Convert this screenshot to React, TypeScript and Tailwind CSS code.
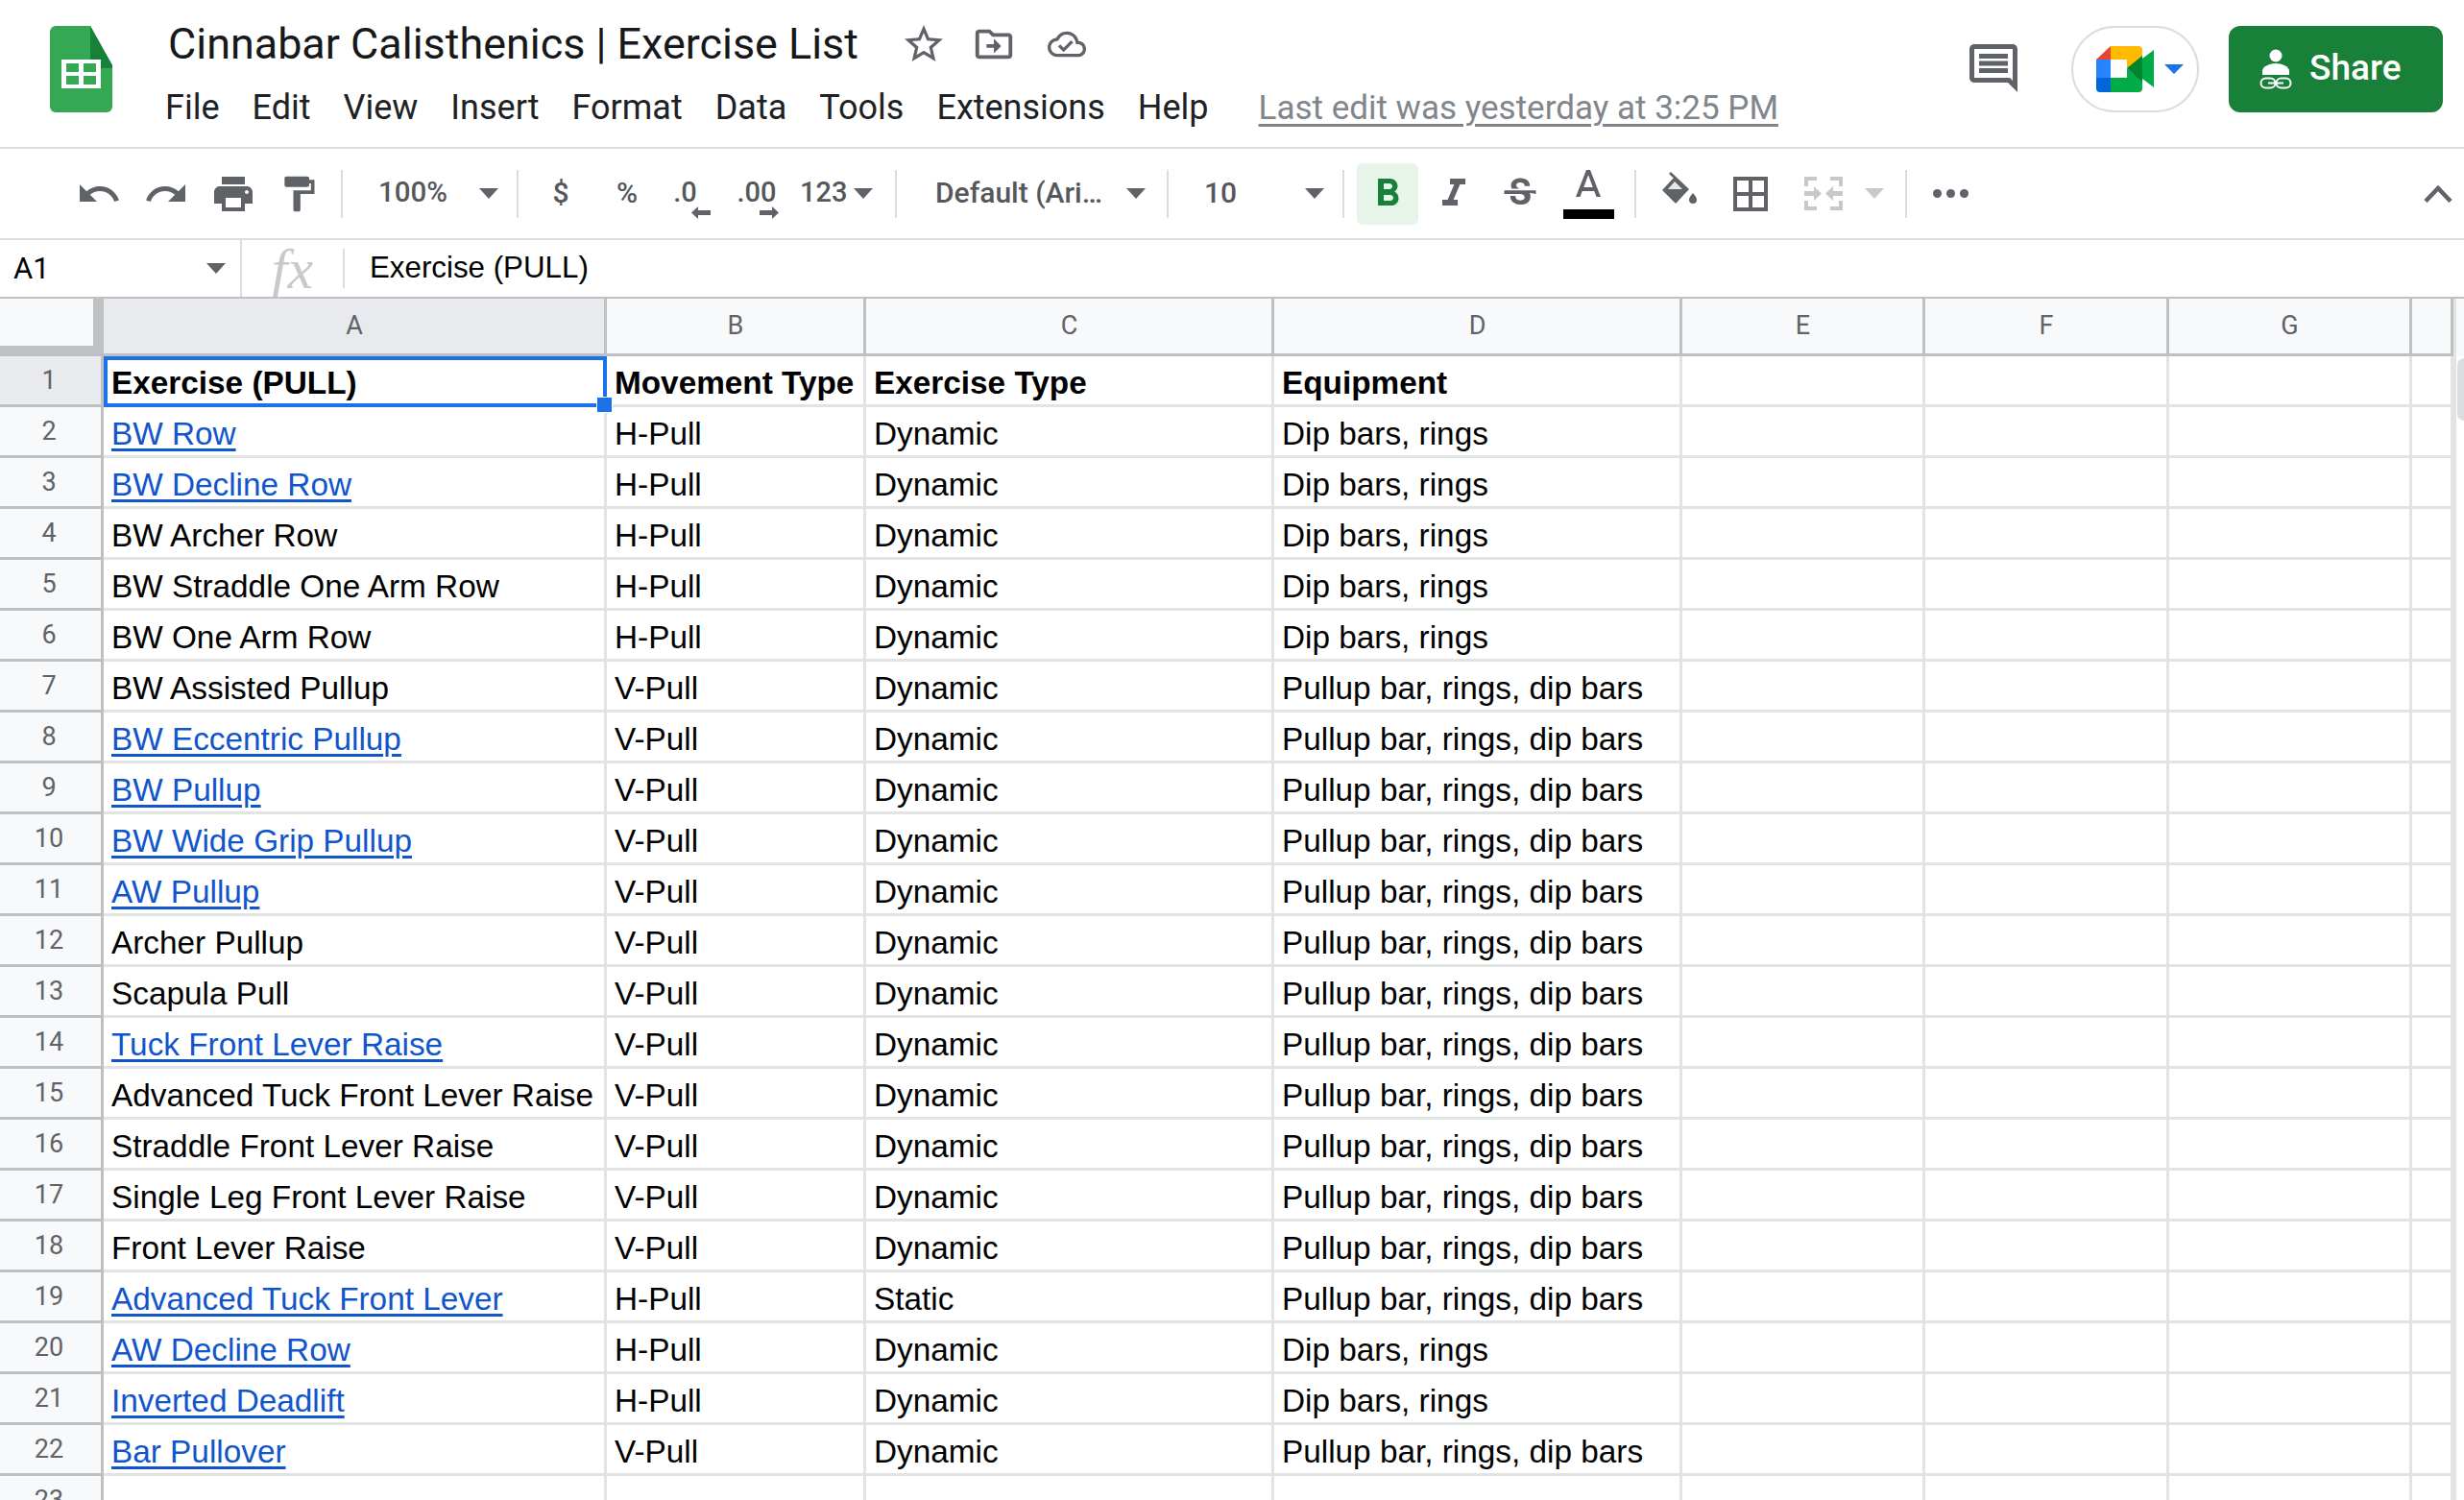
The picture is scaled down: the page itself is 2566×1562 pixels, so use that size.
import React from 'react';

type Row = { a: string; link?: boolean; b: string; c: string; d: string };

const DIP = 'Dip bars, rings';
const PULL = 'Pullup bar, rings, dip bars';

const rows: Row[] = [
  { a: 'BW Row', link: true, b: 'H-Pull', c: 'Dynamic', d: DIP },
  { a: 'BW Decline Row', link: true, b: 'H-Pull', c: 'Dynamic', d: DIP },
  { a: 'BW Archer Row', b: 'H-Pull', c: 'Dynamic', d: DIP },
  { a: 'BW Straddle One Arm Row', b: 'H-Pull', c: 'Dynamic', d: DIP },
  { a: 'BW One Arm Row', b: 'H-Pull', c: 'Dynamic', d: DIP },
  { a: 'BW Assisted Pullup', b: 'V-Pull', c: 'Dynamic', d: PULL },
  { a: 'BW Eccentric Pullup', link: true, b: 'V-Pull', c: 'Dynamic', d: PULL },
  { a: 'BW Pullup', link: true, b: 'V-Pull', c: 'Dynamic', d: PULL },
  { a: 'BW Wide Grip Pullup', link: true, b: 'V-Pull', c: 'Dynamic', d: PULL },
  { a: 'AW Pullup', link: true, b: 'V-Pull', c: 'Dynamic', d: PULL },
  { a: 'Archer Pullup', b: 'V-Pull', c: 'Dynamic', d: PULL },
  { a: 'Scapula Pull', b: 'V-Pull', c: 'Dynamic', d: PULL },
  { a: 'Tuck Front Lever Raise', link: true, b: 'V-Pull', c: 'Dynamic', d: PULL },
  { a: 'Advanced Tuck Front Lever Raise', b: 'V-Pull', c: 'Dynamic', d: PULL },
  { a: 'Straddle Front Lever Raise', b: 'V-Pull', c: 'Dynamic', d: PULL },
  { a: 'Single Leg Front Lever Raise', b: 'V-Pull', c: 'Dynamic', d: PULL },
  { a: 'Front Lever Raise', b: 'V-Pull', c: 'Dynamic', d: PULL },
  { a: 'Advanced Tuck Front Lever', link: true, b: 'H-Pull', c: 'Static', d: PULL },
  { a: 'AW Decline Row', link: true, b: 'H-Pull', c: 'Dynamic', d: DIP },
  { a: 'Inverted Deadlift', link: true, b: 'H-Pull', c: 'Dynamic', d: DIP },
  { a: 'Bar Pullover', link: true, b: 'V-Pull', c: 'Dynamic', d: PULL },
];

const Icon = ({ d, size = 48, color = '#5f6368' }: { d: string; size?: number; color?: string }) => (
  <svg width={size} height={size} viewBox="0 0 24 24" fill={color} className="shrink-0">
    <path d={d} />
  </svg>
);

const Caret = () => (
  <div className="w-0 h-0 shrink-0 border-l-[10px] border-r-[10px] border-t-[11px] border-l-transparent border-r-transparent border-t-[#5f6368]" />
);

const Divider = () => <div className="w-[2px] h-[50px] shrink-0 bg-[#dadce0]" />;

const SheetsLogo = () => (
  <svg width="65" height="90" viewBox="0 0 65 90" className="shrink-0">
    <path d="M6 0H42L65 41V84a6 6 0 0 1-6 6H6a6 6 0 0 1-6-6V6a6 6 0 0 1 6-6z" fill="#34a853" />
    <path d="M42 0L65 41V44H42z" fill="#188038" />
    <rect x="12" y="35" width="41" height="30" fill="#fff" />
    <rect x="17" y="39" width="13" height="9" fill="#34a853" />
    <rect x="35" y="39" width="13" height="9" fill="#34a853" />
    <rect x="17" y="52" width="13" height="9" fill="#34a853" />
    <rect x="35" y="52" width="13" height="9" fill="#34a853" />
  </svg>
);

const MeetLogo = () => (
  <svg width="60" height="48" viewBox="0 0 60 48" className="shrink-0">
    <path d="M15 0L0 14H15z" fill="#ea4335" />
    <rect x="0" y="14" width="15" height="19" fill="#2684fc" />
    <path d="M0 33H15V48H4a4 4 0 0 1-4-4z" fill="#0066da" />
    <path d="M15 0H44a4 4 0 0 1 4 4V15L32 23V14H15z" fill="#ffba00" />
    <rect x="15" y="14" width="17" height="19" fill="#fff" />
    <path d="M15 33H32V23L48 36V44a4 4 0 0 1-4 4H15z" fill="#00ac47" />
    <path d="M48 13L60 4V43L48 34z" fill="#00ac47" />
    <path d="M32 23L48 10V37z" fill="#00832d" />
  </svg>
);

const ShareIcon = () => (
  <svg width="34" height="42" viewBox="0 0 34 42" fill="none" className="shrink-0">
    <circle cx="17" cy="7" r="6.5" fill="#fff" />
    <path d="M3 27v-4c0-5 8-8 14-8s14 3 14 8v4z" fill="#fff" />
    <rect x="1.5" y="30.5" width="15" height="10" rx="5" stroke="#fff" strokeWidth="2" />
    <rect x="17.5" y="30.5" width="15" height="10" rx="5" stroke="#fff" strokeWidth="2" />
    <rect x="9" y="34.5" width="16" height="2" fill="#fff" />
  </svg>
);

const MergeIcon = () => (
  <svg width="40" height="35" viewBox="0 0 40 35" fill="#c6c8ca" className="shrink-0">
    <path d="M0 0H13V4H4V10H0zM27 0H40V10H36V4H27zM0 25H4V31H13V35H0zM36 25H40V35H27V31H36z" />
    <path d="M0 15H10V10L18 17.5L10 25V20H0zM40 15H30V10L22 17.5L30 25V20H40z" />
  </svg>
);

const FillIcon = () => (
  <svg width="36" height="36" viewBox="0 0 36 36" className="shrink-0 mb-[9px]">
    <path d="M7 2L9 0L28 18L26 20z" fill="#5f6368" />
    <path d="M13 5L0 19L13 32Q14 33 15 32L27 19z" fill="#5f6368" />
    <path d="M6 18H21L13 10z" fill="#e6e7e8" />
    <path d="M32 22s-4 4-4 7a4 4 0 0 0 8 0c0-3-4-7-4-7z" fill="#5f6368" />
  </svg>
);

const cellBase = 'flex items-end pl-2 pb-[3px] whitespace-nowrap text-[33.33px] leading-[38px] text-black border-r-[3px] border-b-[3px] border-[#e2e3e3]';
const cellText = `${cellBase} overflow-hidden`;
const colHead = "flex items-center justify-center pl-[1px] font-['Roboto',sans-serif] text-[27px] text-[#5f6368] border-r-[3px] border-b-[3px] border-[#bfc0c1]";
const rowHead = "flex items-center justify-center pr-[3px] font-['Roboto',sans-serif] text-[27px] text-[#5f6368] border-r-[3px] border-b-[3px] border-[#bfc0c1]";

export default function App() {
  const menu = ['File', 'Edit', 'View', 'Insert', 'Format', 'Data', 'Tools', 'Extensions', 'Help'];

  return (
    <div className="w-[2566px] h-[1562px] overflow-hidden bg-white font-['Roboto',sans-serif]">
      {/* Title bar */}
      <header className="h-[155px] flex border-b-2 border-[#dadce0]">
        <div className="ml-[52px] mt-[27px]">
          <SheetsLogo />
        </div>
        <div className="ml-[55px] pt-[21px]">
          <div className="h-[50px] flex items-center">
            <span className="ml-[3px] text-[44.9px] leading-none text-[#17181a]">Cinnabar Calisthenics | Exercise List</span>
            <div className="ml-[44px]">
              <Icon d="M22 9.24l-7.19-.62L12 2 9.19 8.63 2 9.24l5.46 4.73L5.82 21 12 17.27 18.18 21l-1.63-7.03L22 9.24zM12 15.4l-3.76 2.27 1-4.28-3.32-2.88 4.38-.38L12 6.1l1.71 4.04 4.38.38-3.32 2.88 1 4.28L12 15.4z" />
            </div>
            <div className="ml-[26px]">
              <Icon size={46} d="M20 6h-8l-2-2H4c-1.1 0-1.99.9-1.99 2L2 18c0 1.1.9 2 2 2h16c1.1 0 2-.9 2-2V8c0-1.1-.9-2-2-2zm0 12H4V6h5.17l2 2H20v10zm-8-4H8v-2h4V9l4 4-4 4v-3z" />
            </div>
            <div className="ml-[33px]">
              <Icon size={40} d="M19.35 10.04C18.67 6.59 15.64 4 12 4 9.11 4 6.6 5.64 5.35 8.04 2.34 8.36 0 10.91 0 14c0 3.31 2.69 6 6 6h13c2.76 0 5-2.24 5-5 0-2.64-2.05-4.78-4.65-4.96zM19 18H6c-2.21 0-4-1.79-4-4 0-2.05 1.53-3.76 3.56-3.97l1.07-.11.5-.95C8.08 7.14 9.94 6 12 6c2.62 0 4.88 1.86 5.39 4.43l.3 1.5 1.53.11c1.56.1 2.78 1.41 2.78 2.96 0 1.65-1.35 3-3 3zm-9-3.82l-2.09-2.09L6.5 13.5 10 17l6.01-6.01-1.41-1.41z" />
            </div>
          </div>
          <div className="mt-[16px] h-[50px] flex items-center gap-[34px] text-[36px] leading-none text-[#202124]">
            {menu.map((m) => (
              <span key={m}>{m}</span>
            ))}
            <span className="ml-[18px] text-[35px] text-[#80868b] underline decoration-[3px] underline-offset-[5px]">Last edit was yesterday at 3:25 PM</span>
          </div>
        </div>
        <div className="ml-auto mr-[22px] mt-[27px] flex items-start">
          <div className="mt-[14px]">
            <Icon size={60} d="M21.99 4c0-1.1-.89-2-1.99-2H4c-1.1 0-2 .9-2 2v12c0 1.1.9 2 2 2h14l4 4-.01-18zM20 4v13.17L18.83 16H4V4h16zM6 12h12v2H6zm0-3h12v2H6zm0-3h12v2H6z" />
          </div>
          <div className="ml-[51px] w-[133px] h-[90px] rounded-full border-2 border-[#dadce0] flex items-center pl-[24px]">
            <MeetLogo />
            <div className="ml-[11px] w-0 h-0 border-l-[10px] border-r-[10px] border-t-[10px] border-l-transparent border-r-transparent border-t-[#1a73e8]" />
          </div>
          <div className="ml-[31px] w-[223px] h-[90px] rounded-xl bg-[#188038] flex items-center pl-[32px] gap-[18px]">
            <ShareIcon />
            <span className="text-[37px] leading-none font-medium text-white pb-1">Share</span>
          </div>
        </div>
      </header>

      {/* Toolbar */}
      <div className="h-[95px] flex items-center pl-[68px] pr-[12px] border-b-2 border-[#dadce0] text-[30px] leading-none font-medium text-[#54585d]">
        <div className="w-[70px] flex justify-center"><Icon d="M12.5 8c-2.65 0-5.05.99-6.9 2.6L2 7v9h9l-3.62-3.62c1.39-1.16 3.16-1.88 5.12-1.88 3.54 0 6.55 2.31 7.6 5.5l2.37-.78C21.08 11.03 17.15 8 12.5 8z" /></div>
        <div className="w-[70px] flex justify-center"><Icon d="M18.4 10.6C16.55 8.99 14.15 8 11.5 8c-4.65 0-8.58 3.03-9.96 7.22L3.9 16c1.05-3.19 4.05-5.5 7.6-5.5 1.95 0 3.73.72 5.12 1.88L13 16h9V7l-3.6 3.6z" /></div>
        <div className="w-[70px] flex justify-center"><Icon d="M19 8H5c-1.66 0-3 1.34-3 3v6h4v4h12v-4h4v-6c0-1.66-1.34-3-3-3zm-3 11H8v-5h8v5zm3-7c-.55 0-1-.45-1-1s.45-1 1-1 1 .45 1 1-.45 1-1 1zm-1-9H6v4h12V3z" /></div>
        <div className="w-[66px] flex justify-center"><Icon size={44} d="M18 4V3c0-.55-.45-1-1-1H5c-.55 0-1 .45-1 1v4c0 .55.45 1 1 1h12c.55 0 1-.45 1-1V6h1v4H9v11c0 .55.45 1 1 1h2c.55 0 1-.45 1-1v-9h8V4h-3z" /></div>
        <div className="ml-[11px]"><Divider /></div>

        <span className="ml-[37px] w-[72px] pb-[2px] whitespace-nowrap text-[29.5px]">100%</span>
        <div className="ml-[33px]"><Caret /></div>
        <div className="ml-[19px]"><Divider /></div>

        <span className="w-[88px] pb-[2px] text-center">$</span>
        <span className="w-[50px] pb-[2px] text-center">%</span>
        <div className="w-[71px] flex justify-center">
          <span className="relative pb-[2px] text-[29px]">
            .0
            <svg width="20" height="13" viewBox="0 0 20 13" fill="#5f6368" className="absolute left-[19px] top-[29px]"><path d="M7 0L0 6.5 7 13V9h13V4H7z" /></svg>
          </span>
        </div>
        <div className="w-[78px] flex justify-center">
          <span className="relative pb-[2px] text-[29px]">
            .00
            <svg width="20" height="13" viewBox="0 0 20 13" fill="#5f6368" className="absolute left-[24px] top-[29px]"><path d="M13 0l7 6.5L13 13V9H0V4h13z" /></svg>
          </span>
        </div>
        <span className="ml-[6px] w-[49px] pb-[2px] text-[29px]">123</span>
        <div className="ml-[7px]"><Caret /></div>
        <div className="ml-[23px]"><Divider /></div>

        <span className="ml-[40px] w-[171px] pb-[2px] whitespace-nowrap">Default (Ari…</span>
        <div className="ml-[28px]"><Caret /></div>
        <div className="ml-[22px]"><Divider /></div>

        <span className="ml-[37px] w-[33px] pb-[2px]">10</span>
        <div className="ml-[72px]"><Caret /></div>
        <div className="ml-[19px]"><Divider /></div>

        <div className="ml-[13px] w-[64px] h-[64px] rounded-md bg-[#e6f4ea] flex items-center justify-center">
          <Icon color="#188038" d="M15.6 10.79c.97-.67 1.65-1.77 1.65-2.79 0-2.26-1.75-4-4-4H7v14h7.04c2.09 0 3.71-1.7 3.71-3.79 0-1.52-.86-2.82-2.15-3.42zM10 6.5h3c.83 0 1.5.67 1.5 1.5s-.67 1.5-1.5 1.5h-3v-3zm3.5 9H10v-3h3.5c.83 0 1.5.67 1.5 1.5s-.67 1.5-1.5 1.5z" />
        </div>
        <div className="w-[74px] flex justify-center"><Icon d="M10 4v3h2.21l-3.42 8H6v3h8v-3h-2.21l3.42-8H18V4z" /></div>
        <div className="w-[64px] flex justify-center"><Icon size={44} d="M6.85 7.08C6.85 4.37 9.45 3 12.24 3c1.64 0 3 .49 3.9 1.28.77.65 1.46 1.73 1.46 3.24h-3.01c0-.31-.05-.59-.15-.85-.29-.86-1.2-1.28-2.25-1.28-1.86 0-2.34 1.02-2.34 1.7 0 .48.25.88.74 1.21.38.25.77.48 1.41.7H7.39c-.21-.34-.54-.89-.54-1.92zM21 12v-2H3v2h9.62c1.15.45 1.96.75 1.96 1.97 0 1-.81 1.67-2.28 1.67-1.54 0-2.93-.54-2.93-2.51H6.4c0 .55.08 1.13.24 1.58.81 2.29 3.22 3.3 5.67 3.3 2.35 0 5.59-.92 5.59-4.69 0-.34-.02-1.17-.47-2.01L21 12z" /></div>
        <div className="w-[78px] h-[60px] flex flex-col items-center justify-start">
          <div className="h-[44px] -mt-[1px]"><Icon d="M11 3L5.5 17h2.25l1.12-3h6.25l1.12 3h2.25L13 3h-2zm-1.38 9L12 5.67 14.38 12H9.62z" /></div>
          <div className="mt-[3px] w-[53px] h-[10px] bg-black" />
        </div>
        <div className="ml-[9px]"><Divider /></div>

        <div className="w-[90px] flex justify-center"><FillIcon /></div>
        <div className="w-[58px] flex justify-center"><Icon d="M3 3v18h18V3H3zm8 16H5v-6h6v6zm0-8H5V5h6v6zm8 8h-6v-6h6v6zm0-8h-6V5h6v6z" /></div>
        <div className="w-[80px] pl-[27px]"><MergeIcon /></div>
        <div className="ml-[10px] w-0 h-0 border-l-[10px] border-r-[10px] border-t-[11px] border-l-transparent border-r-transparent border-t-[#c6c8ca]" />
        <div className="ml-[22px]"><Divider /></div>
        <div className="ml-[27px] flex gap-[5px]">
          <div className="w-[9px] h-[9px] rounded-full bg-[#5f6368]" />
          <div className="w-[9px] h-[9px] rounded-full bg-[#5f6368]" />
          <div className="w-[9px] h-[9px] rounded-full bg-[#5f6368]" />
        </div>
        <div className="ml-auto">
          <svg width="30" height="18" viewBox="0 0 30 18" fill="none" stroke="#5f6368" strokeWidth="4.5"><path d="M2 16.5L15 3l13 13.5" /></svg>
        </div>
      </div>

      {/* Formula bar */}
      <div className="h-[59px] flex items-center">
        <div className="w-[252px] h-full flex items-center pl-[14px] pr-[15px] justify-between border-r-2 border-[#dadce0] text-[31px] text-black">
          <span className="pt-[2px]">A1</span>
          <Caret />
        </div>
        <div className="w-[105px] flex justify-center font-['Liberation_Serif',serif] italic text-[60px] leading-none text-[#c8c9ca]">fx</div>
        <div className="w-[2px] h-[41px] bg-[#dadce0]" />
        <span className="ml-[26px] font-['Liberation_Sans',sans-serif] text-[31.3px] text-black">Exercise (PULL)</span>
      </div>

      {/* Grid */}
      <div className="relative border-t-2 border-[#bfc0c1] font-['Liberation_Sans',sans-serif]">
        <div className="grid grid-cols-[108px_524px_270px_425px_425px_253px_254px_253px_43px_11px] grid-rows-[60px] auto-rows-[53px]">
          <div className="bg-white">
            <div className="w-full h-full bg-[#f8f9fa] border-r-[11px] border-b-[11px] border-[#bfc0c1]" />
          </div>
          {['A', 'B', 'C', 'D', 'E', 'F', 'G', ''].map((c) => (
            <div key={c || 'end'} className={`${colHead} ${c === 'A' ? 'bg-[#e8eaed]' : 'bg-[#f8f9fa]'}`}>
              {c}
            </div>
          ))}
          <div className="border-l-[3px] border-[#e2e3e3] bg-[#f8f9fa]" />

          {/* Row 1 */}
          <div className={`${rowHead} bg-[#e8eaed]`}>1</div>
          <div className={`${cellBase} font-bold relative`}>
            Exercise (PULL)
            <div className="absolute inset-0 -right-[3px] -bottom-[3px] border-4 border-[#1a73e8] pointer-events-none" />
            <div className="absolute -right-[8px] -bottom-[8px] w-[15px] h-[15px] bg-[#1a73e8] outline-1 outline-white z-10" />
          </div>
          <div className={`${cellText} font-bold`}>Movement Type</div>
          <div className={`${cellText} font-bold`}>Exercise Type</div>
          <div className={`${cellText} font-bold`}>Equipment</div>
          <div className={cellText} />
          <div className={cellText} />
          <div className={cellText} />
          <div className={cellText} />
          <div className="border-l-[3px] border-[#e2e3e3]" />

          {rows.map((r, i) => (
            <React.Fragment key={r.a}>
              <div className={`${rowHead} bg-[#f8f9fa]`}>{i + 2}</div>
              <div className={cellText}>
                {r.link ? (
                  <span className="text-[#1155cc] underline decoration-[3px] underline-offset-[4px]">{r.a}</span>
                ) : (
                  r.a
                )}
              </div>
              <div className={cellText}>{r.b}</div>
              <div className={cellText}>{r.c}</div>
              <div className={cellText}>{r.d}</div>
              <div className={cellText} />
              <div className={cellText} />
              <div className={cellText} />
              <div className={cellText} />
              <div className="border-l-[3px] border-[#e2e3e3]" />
            </React.Fragment>
          ))}

          {/* Row 23, cut off by the window */}
          <div className={`${rowHead} bg-[#f8f9fa]`}>23</div>
          <div className={cellText} />
          <div className={cellText} />
          <div className={cellText} />
          <div className={cellText} />
          <div className={cellText} />
          <div className={cellText} />
          <div className={cellText} />
          <div className={cellText} />
          <div className="border-l-[3px] border-[#e2e3e3]" />
        </div>
        <div className="absolute right-0 top-[62px] w-[7px] h-[65px] rounded-l-lg bg-[#dadce0]" />
      </div>
    </div>
  );
}
